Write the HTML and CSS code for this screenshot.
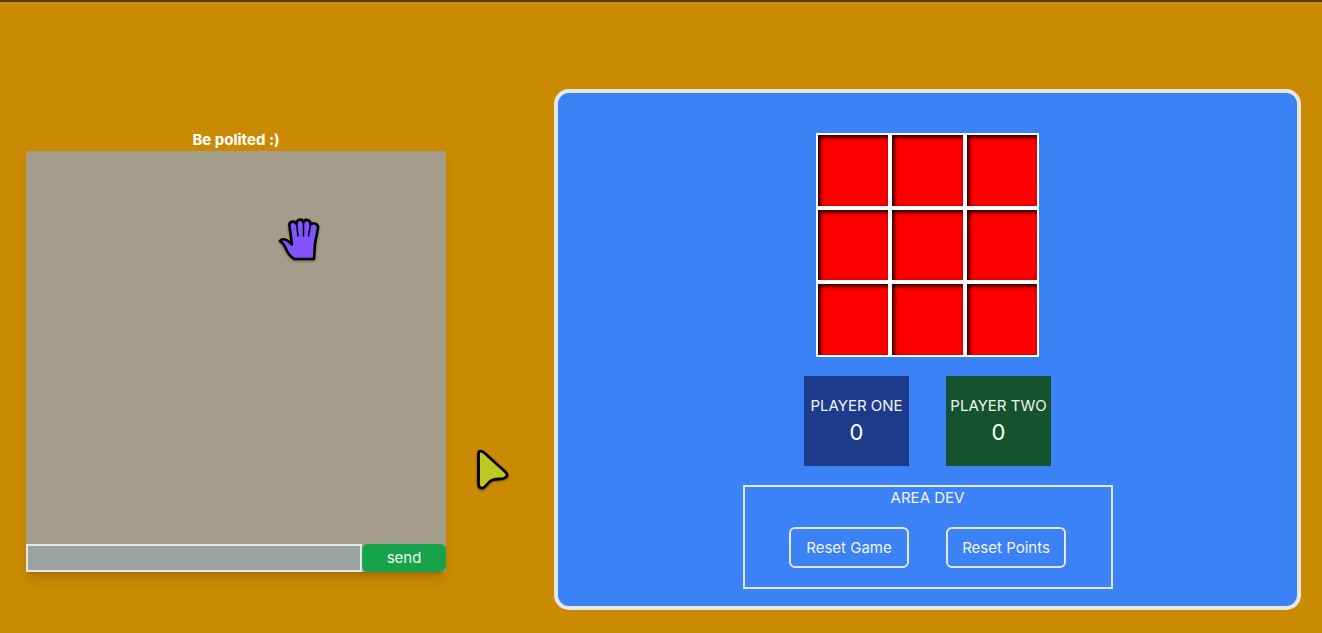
FILE: index.html
```html
<!DOCTYPE html>
<html lang="en">
<head>
<meta charset="utf-8">
<meta name="viewport" content="width=device-width, initial-scale=1">
<title>Tic Tac Toe</title>
<link rel="stylesheet" href="styles.css">
</head>
<body>
<main class="page">
  <section class="chat">
    <h1 class="chat-title">Be polited :)</h1>
    <div class="chat-box">
      <div class="messages"></div>
      <form class="chat-form">
        <input class="chat-input" type="text" aria-label="Message">
        <button class="send" type="button">send</button>
      </form>
    </div>
  </section>
  <section class="game">
    <div class="board">
      <button class="cell" type="button" aria-label="Cell 1"></button>
      <button class="cell" type="button" aria-label="Cell 2"></button>
      <button class="cell" type="button" aria-label="Cell 3"></button>
      <button class="cell" type="button" aria-label="Cell 4"></button>
      <button class="cell" type="button" aria-label="Cell 5"></button>
      <button class="cell" type="button" aria-label="Cell 6"></button>
      <button class="cell" type="button" aria-label="Cell 7"></button>
      <button class="cell" type="button" aria-label="Cell 8"></button>
      <button class="cell" type="button" aria-label="Cell 9"></button>
    </div>
    <div class="scores">
      <div class="score score-one"><span>PLAYER ONE</span><span class="points">0</span></div>
      <div class="score score-two"><span>PLAYER TWO</span><span class="points">0</span></div>
    </div>
    <div class="dev">
      <p class="dev-title">AREA DEV</p>
      <div class="dev-actions">
        <button class="reset" type="button">Reset Game</button>
        <button class="reset" type="button">Reset Points</button>
      </div>
    </div>
  </section>
</main>
<svg class="cursor cursor-hand" viewBox="0 0 50 54" aria-hidden="true">
  <path d="M40 47H20.500C15.500 44.500 13.500 40.500 11.500 36C10 32.500 8.500 30.500 6 29C7.500 26.500 11.500 26.500 14.500 29.500L18 32.500L15.500 14C14.500 9.500 20.500 8 22.500 12C22.500 6.500 28.500 6.500 29.500 10.500C30.500 6.500 36.500 7 36.500 12.500C38.500 10 44.500 11.500 44 16L41 31.500Z" fill="#8353ff" stroke="#000" stroke-width="2.600" stroke-linejoin="round"/>
  <path d="M22.500 12L24 24M29.500 10V24M36.500 12.500L34.500 24" fill="none" stroke="#000" stroke-width="1.500" stroke-linecap="round"/>
</svg>
<svg class="cursor cursor-arrow" viewBox="0 0 50 54" aria-hidden="true">
  <path d="M8.500 13.500V43.500C8.500 49 13 49.500 16 45.500C20 40.500 22 39 29 39C37 39 39 35 35 31.500L14.500 13C11.500 10.500 8.500 10.500 8.500 13.500Z" fill="#bdc922" stroke="#000" stroke-width="2.800" stroke-linejoin="round"/>
</svg>
</body>
</html>
```
FILE: styles.css
```css
* { box-sizing: border-box; margin: 0; }

body {
  min-height: 100vh;
  border-top: 2px solid #553b1c;
  background: #ca8a04;
  color: #fff;
  font: 15px/22px Inter, sans-serif;
}

button, input { font: inherit; color: inherit; }

button { padding: 0; cursor: pointer; }

.page {
  display: flex;
  align-items: center;
  gap: 108px;
  padding: 87px 21px 23px 26px;
}

.chat { flex: 0 1 420px; }

.chat-title {
  padding-top: 2px;
  font-size: 15px;
  font-weight: 700;
  text-align: center;
}

.chat-box {
  border-radius: 4px;
  background: #a39d8a;
  box-shadow: 0 9px 14px -3px rgba(0, 0, 0, .12), 0 4px 6px -4px rgba(0, 0, 0, .25);
}

.messages { height: 393px; }

.chat-form { display: flex; height: 28px; }

.chat-input {
  width: 80%;
  min-width: 0;
  padding: 0 8px;
  border: 2px solid #e5e7eb;
  border-radius: 0;
  background: #9ca3a2;
}

.send {
  width: 20%;
  border: 0;
  border-radius: 6px;
  background: #16a34a;
  color: #f3f4f6;
}

.game {
  flex: 1;
  display: flex;
  flex-direction: column;
  align-items: center;
  gap: 19px;
  padding: 40px 16px 17px;
  border: 4px solid #e5e7eb;
  border-radius: 15px;
  background: #3b82f6;
}

.board {
  display: grid;
  grid-template-columns: repeat(3, 1fr);
  width: 224px;
  aspect-ratio: 1;
}

.cell {
  border: 2px solid #fff;
  border-radius: 0;
  background: #f00;
  box-shadow: inset 2px 2px 4px #000;
}

.scores { display: flex; gap: 37px; }

.score {
  display: flex;
  flex-direction: column;
  align-items: center;
  justify-content: center;
  width: 105px;
  height: 90px;
  color: #f3f4f6;
  white-space: nowrap;
}

.score-one { background: #1e3a8a; }
.score-two { background: #14532d; }

.points { color: #fff; font-size: 22px; line-height: 30px; }

.dev {
  width: 370px;
  max-width: 100%;
  padding-bottom: 19px;
  border: 2px solid #e5e7eb;
  color: #f3f4f6;
}

.dev-title { text-align: center; }

.dev-actions {
  display: flex;
  justify-content: center;
  gap: 37px;
  margin-top: 18px;
}

.reset {
  width: 120px;
  height: 41px;
  border: 2px solid #e5e7eb;
  border-radius: 6px;
  background: transparent;
}

.cursor {
  position: absolute;
  width: 50px;
  height: 54px;
  filter: drop-shadow(0 1px 1px rgba(0, 0, 0, .4));
  pointer-events: none;
}

.cursor-hand { left: 274px; top: 212px; }
.cursor-arrow { left: 470px; top: 440px; }
```
